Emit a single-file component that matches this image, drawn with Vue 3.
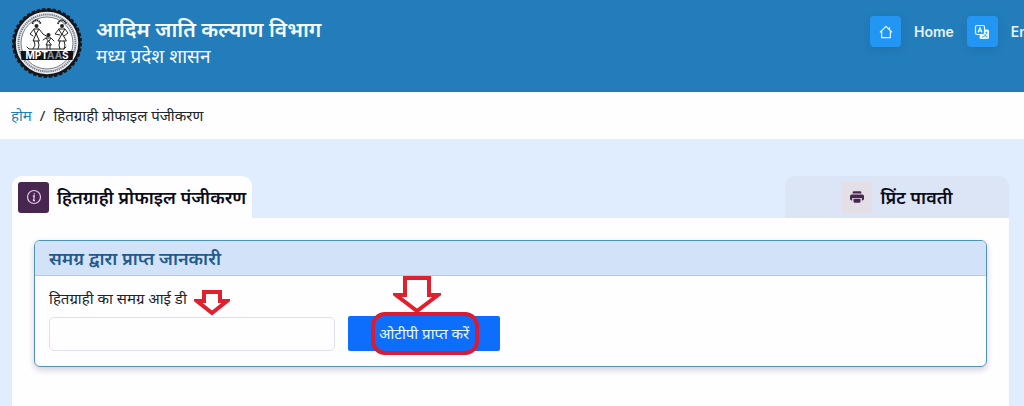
<template>
  <div class="page">
    <header class="header">
      <svg class="logo" viewBox="0 0 72 72" aria-hidden="true">
        <circle cx="36" cy="36" r="32.500" fill="#e9edf2" stroke="#15171d" stroke-width="2.500" />
        <circle cx="36" cy="36" r="33.500" fill="none" stroke="#15171d" stroke-width="3" stroke-dasharray="3.400 1.860" />
        <circle cx="36" cy="36" r="28.500" fill="none" stroke="#777b83" stroke-width="2" stroke-dasharray="1.300 .8" />
        <circle cx="36" cy="36" r="26" fill="#fff" stroke="#777b83" stroke-width="1" />
        <g fill="none" stroke="#222" stroke-width="1" stroke-linecap="round" stroke-linejoin="round">
          <path d="M16 40l2 2h35l2-2" />
          <path d="M23 22l-4 5 3 2M23 22h5l-3 5zM28 22l4 5 5 3M25 27l-3 7h6zM23 34l1 4-2 4M27 34l1 4-1 4" />
          <path d="M48 22h6l-3 5zM48 22l-4 5 5 1M54 22l3 4-4 3M51 27l-4 7h8zM49 34l-1 4 1 4M53 34l1 4-1 4" />
          <path d="M35 31h5l-2 3zM35 31l-3 2M40 31l3 3M37 34l-2 4h5zM36 38v4M39 38v4" />
        </g>
        <g fill="#222">
          <circle cx="25.500" cy="19" r="2" />
          <circle cx="51" cy="19" r="2" />
          <circle cx="37.500" cy="28" r="2" />
        </g>
        <path d="M21.500 17c1-5 7-5 8 0M47 17c1-5 7-5 8 0" fill="none" stroke="#222" stroke-width="1.800" stroke-dasharray="1.500 .5" />
        <path d="M9.500 44h53l-1 9h-51z" fill="#101218" />
        <text x="36" y="52" text-anchor="middle" class="logo-text">MPT<tspan fill="#8a8d94">AA</tspan>S</text>
      </svg>
      <div class="brand">
        <h1>आदिम जाति कल्याण विभाग</h1>
        <p>मध्य प्रदेश शासन</p>
      </div>
      <nav class="nav">
        <a href="#" class="nav-link">
          <span class="nav-icon">
            <svg viewBox="0 0 16 16" width="14" height="14" fill="none" stroke="#e9fbff" stroke-width="1.300" stroke-linejoin="round">
              <path d="M1 8.500L8 1.500l7 7M3 7v7.500h10V7M12 5V2.500" />
            </svg>
          </span>
          <span>Home</span>
        </a>
        <a href="#" class="nav-link">
          <span class="nav-icon">
            <svg viewBox="0 0 16 16" width="16" height="16">
              <path d="M6 5.500h7.500a1.500 1.500 0 0 1 1.500 1.500v6.500a1.500 1.500 0 0 1-1.500 1.500H7a1.500 1.500 0 0 1-1.500-1.500z" fill="#e9fbff" />
              <rect x="1.500" y="1.500" width="9" height="9" rx="1.500" fill="#2396f3" stroke="#e9fbff" stroke-width="1.200" />
              <path d="M4 8.500L6 3.500l2 5M4.700 7h2.600" fill="none" stroke="#e9fbff" stroke-width="1.200" />
              <path d="M11.500 8.500h2M12.500 7.500v1M8 13c2 0 4-1.500 4.500-4M10.500 11l3 2" fill="none" stroke="#2396f3" stroke-width=".8" />
            </svg>
          </span>
          <span>English</span>
        </a>
      </nav>
    </header>

    <div class="breadcrumb">
      <a href="#">होम</a>
      <span>/</span>
      <span>हितग्राही प्रोफाइल पंजीकरण</span>
    </div>

    <main class="content">
      <div class="tabs">
        <button type="button" class="tab" :class="{ active: tab === 'profile' }" @click="tab = 'profile'">
          <span class="tab-icon dark">
            <svg viewBox="0 0 16 16" width="16" height="16" fill="none" stroke="#e6c9ea">
              <circle cx="8" cy="8" r="6.500" stroke-width="1.200" />
              <path d="M6.800 7h1.500l-.8 4.500h1.500M8.300 4.200v1.200" stroke-width="1.300" />
            </svg>
          </span>
          <span>हितग्राही प्रोफाइल पंजीकरण</span>
        </button>
        <button type="button" class="tab print" :class="{ active: tab === 'print' }" @click="tab = 'print'">
          <span class="tab-icon">
            <svg viewBox="0 0 16 16" width="14" height="14" fill="#47264f">
              <path d="M4.500 1.500h7a1.500 1.500 0 0 1 1.500 1.500v1H3V3a1.500 1.500 0 0 1 1.500-1.500z" />
              <path d="M2 5h12a2 2 0 0 1 2 2v3a2 2 0 0 1-2 2h-.5V9h-11v3H2a2 2 0 0 1-2-2V7a2 2 0 0 1 2-2z" />
              <path d="M4 10h8v3a1.500 1.500 0 0 1-1.500 1.500h-5A1.500 1.500 0 0 1 4 13z" />
            </svg>
          </span>
          <span>प्रिंट पावती</span>
        </button>
      </div>

      <div class="panel">
        <section class="card">
          <h2>समग्र द्वारा प्राप्त जानकारी</h2>
          <form class="card-body" @submit.prevent>
            <div class="field">
              <label for="samagraId">हितग्राही का समग्र आई डी</label>
              <svg class="arrow field-arrow" viewBox="0 0 36 26" width="36" height="26">
                <path d="M10 2h16v9h7L18 23 3 11h7z" />
              </svg>
              <input id="samagraId" v-model="samagraId" type="text" />
            </div>
            <button type="submit" class="otp-button">
              <svg class="arrow otp-arrow" viewBox="0 0 48 38" width="48" height="38">
                <path d="M12 2h24v17h9L24 35 3 19h9z" />
              </svg>
              <span class="mark"></span>
              <span>ओटीपी प्राप्त करें</span>
            </button>
          </form>
        </section>
      </div>
    </main>
  </div>
</template>

<script setup>
import { ref } from "vue";

const tab = ref("profile");
const samagraId = ref("");
</script>

<style>
body {
  background: #e0edff;
}
</style>

<style scoped>
.page {
  min-height: 100vh;
  display: flex;
  flex-direction: column;
  font-family: "Noto Sans", "Liberation Sans", sans-serif;
  color: #212529;
}

.page * {
  box-sizing: border-box;
}

h1,
h2,
p {
  margin: 0;
}

button {
  font-family: inherit;
  border: none;
  cursor: pointer;
}

a {
  text-decoration: none;
}

/* Header */
.header {
  height: 92px;
  display: flex;
  padding: 7px 0 0 11px;
  background: #237dba;
  overflow: hidden;
}

.logo {
  width: 72px;
  height: 72px;
  flex: none;
}

.logo-text {
  font: bold 10px Inter, sans-serif;
  fill: #fff;
}

.brand {
  margin: 8px 0 0 13px;
  color: #f2fbff;
}

.brand h1 {
  font-size: 21px;
  line-height: 28px;
  font-weight: 600;
}

.brand p {
  font-size: 19px;
  line-height: 26px;
}

.nav {
  width: 154px;
  flex: none;
  margin: 9px 0 0 auto;
  display: flex;
  gap: 13px;
  white-space: nowrap;
}

.nav-link {
  height: 31px;
  display: flex;
  align-items: center;
  gap: 13px;
  color: #e4f3fb;
  font: 600 14px "Liberation Sans", sans-serif;
  font-family: Inter, sans-serif;
}

.nav-icon {
  width: 31px;
  height: 31px;
  display: flex;
  align-items: center;
  justify-content: center;
  border-radius: 4px;
  background: #2396f3;
  box-shadow: 0 3px 8px rgba(0, 60, 120, 0.15);
}

/* Breadcrumb */
.breadcrumb {
  height: 47px;
  display: flex;
  align-items: center;
  gap: 8px;
  padding: 0 11px 2px;
  background: #fefdff;
  font-size: 15px;
}

.breadcrumb a {
  color: #237dba;
}

/* Tabs */
.content {
  flex: 1;
  display: flex;
  flex-direction: column;
  padding: 37px 15px 0 12px;
}

.tabs {
  display: flex;
  justify-content: space-between;
}

.tab {
  height: 42px;
  display: flex;
  align-items: center;
  gap: 8px;
  padding: 0 6px;
  border-radius: 10px 10px 0 0;
  background: #dbe5f6;
  color: #0c0d18;
  font-size: 18px;
  line-height: 24px;
  font-weight: 600;
  white-space: nowrap;
}

.tab.active {
  background: #fefdff;
}

.tab.print {
  width: 224px;
  justify-content: center;
}

.tab-icon {
  width: 31px;
  height: 31px;
  display: flex;
  align-items: center;
  justify-content: center;
  border-radius: 3px;
  background: #e4dfe7;
}

.tab-icon.dark {
  background: #47264f;
}

.panel {
  flex: 1;
  padding: 22px;
  background: #fefdff;
}

/* Card */
.card {
  border: 1px solid #4f94b8;
  border-radius: 6px;
  box-shadow: 0 3px 6px rgba(40, 30, 60, 0.2);
}

.card h2 {
  padding: 0 14px;
  border-bottom: 1px solid #b5c9e6;
  border-radius: 5px 5px 0 0;
  background: #d2e3f9;
  color: #235a8c;
  font-size: 18px;
  line-height: 34px;
  font-weight: 600;
}

.card-body {
  display: flex;
  align-items: flex-end;
  gap: 13px;
  padding: 11px 14px 15px;
}

.field {
  position: relative;
  width: 31%;
}

.field label {
  display: block;
  margin-bottom: 7px;
  font-size: 15px;
  line-height: 23px;
}

.field input {
  display: block;
  width: 100%;
  height: 34px;
  padding: 0 10px;
  border: 1px solid #dfe1ea;
  border-radius: 5px;
  background: #fefdff;
  font-size: 15px;
}

.otp-button {
  position: relative;
  width: 152px;
  height: 35px;
  padding: 0 0 2px;
  border-radius: 2px;
  background: #0d6efd;
  color: #e9f8ff;
  font-size: 15px;
}

/* Red pointers over the form */
.arrow {
  position: absolute;
  fill: #fefdff;
  stroke: #e11f2d;
  stroke-width: 4;
}

.field-arrow {
  top: 3px;
  left: 145px;
}

.otp-arrow {
  top: -40px;
  left: 45px;
}

.mark {
  position: absolute;
  inset: -4px 21px -4px 23px;
  border: 4px solid #d91c35;
  border-radius: 14px;
}
</style>
